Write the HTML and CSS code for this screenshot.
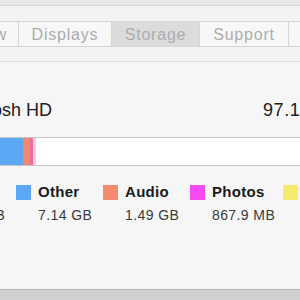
FILE: index.html
```html
<!DOCTYPE html>
<html lang="en">
<head>
    <meta charset="utf-8">
    <title>About This Mac - Storage</title>
    <link rel="stylesheet" href="styles.css">
</head>
<body>
<div class="window">
    <div class="topbar"></div>
    <div class="tabs">
        <div class="tab tab-overview">Overview</div>
        <div class="tab tab-displays">Displays</div>
        <div class="tab tab-storage selected">Storage</div>
        <div class="tab tab-support">Support</div>
        <div class="tab tab-service">Service</div>
    </div>
    <div class="pane">
        <div class="disk">
            <div class="disk-name">Macintosh HD</div>
            <div class="disk-free">97.13 GB available of 120.47 GB</div>
        </div>
        <div class="bar">
            <div class="seg seg-other"></div>
            <div class="seg seg-audio"></div>
            <div class="seg seg-photos"></div>
            <div class="seg seg-movies"></div>
        </div>
        <div class="legend">
            <div class="item item-apps">
                <span class="swatch sw-apps"></span>
                <div class="item-text">
                    <div class="label">Apps</div>
                    <div class="value">3.26 GB</div>
                </div>
            </div>
            <div class="item item-other">
                <span class="swatch sw-other"></span>
                <div class="item-text">
                    <div class="label">Other</div>
                    <div class="value">7.14 GB</div>
                </div>
            </div>
            <div class="item item-audio">
                <span class="swatch sw-audio"></span>
                <div class="item-text">
                    <div class="label">Audio</div>
                    <div class="value">1.49 GB</div>
                </div>
            </div>
            <div class="item item-photos">
                <span class="swatch sw-photos"></span>
                <div class="item-text">
                    <div class="label">Photos</div>
                    <div class="value">867.9 MB</div>
                </div>
            </div>
            <div class="item item-movies">
                <span class="swatch sw-movies"></span>
                <div class="item-text">
                    <div class="label">Movies</div>
                    <div class="value">9.76 GB</div>
                </div>
            </div>
        </div>
    </div>
    <div class="footer"></div>
</div>
</body>
</html>
```
FILE: styles.css
```css
html, body {
    margin:0;
    padding:0;
    width:300px;
    height:300px;
    overflow:hidden;
    background-color:#f3f3f3;
}
.window {
    display:flex;
    flex-direction:column;
    width:520px;
    height:300px;
    margin-left:-100px;
    font-family:"Liberation Sans", Arial, sans-serif;
}
.topbar {
    height:5px;
    background-color:#e7e7e7;
    border-bottom:1px solid #d4d4d4;
}
.tabs {
    display:flex;
    margin-top:15px;
    margin-left:22px;
    border-top:1px solid #d6d6d6;
    border-bottom:1px solid #d6d6d6;
    border-left:1px solid #d6d6d6;
}
.tab {
    box-sizing:border-box;
    flex-shrink:0;
    height:24px;
    line-height:26px;
    text-align:center;
    font-size:16px;
    letter-spacing:0.8px;
    color:#acacac;
    background-color:#f7f7f7;
    border-right:1px solid #d6d6d6;
}
.tab-overview { width:96px; }
.tab-displays { width:93px; }
.tab-storage { width:88px; }
.tab-support { width:89px; }
.tab-service { width:90px; }
.tab.selected {
    background-color:#dcdcdc;
}
.pane {
    flex:1;
    margin-top:14px;
    padding-left:29px;
    padding-top:38px;
    background-color:#f6f6f6;
    border-top:1px solid #dadada;
}
.disk {
    display:flex;
    margin-left:10px;
    font-size:18px;
    line-height:21px;
    color:#202020;
}
.disk-name {
    flex-shrink:0;
    width:324px;
    white-space:nowrap;
}
.disk-free {
    flex-shrink:0;
    letter-spacing:0.6px;
    white-space:nowrap;
}
.bar {
    display:flex;
    box-sizing:border-box;
    width:450px;
    height:29px;
    margin-top:16px;
    margin-left:10px;
    background-color:#ffffff;
    border:1px solid #c6c6c6;
}
.seg { height:100%; }
.seg-other { width:83px; background-color:#5ca8f6; }
.seg-audio { width:7px; background-color:#f3896c; }
.seg-photos { width:3px; background-color:#f06aa8; }
.seg-movies { width:3px; background-color:#f8cfcf; }
.legend {
    display:flex;
    margin-top:17px;
}
.item {
    display:flex;
    flex-shrink:0;
}
.item-apps, .item-other, .item-audio { width:87px; }
.item-photos { width:93px; }
.swatch {
    width:15px;
    height:15px;
    margin-top:2px;
    margin-right:7px;
    flex-shrink:0;
}
.sw-apps { background-color:#5fd0f5; }
.sw-other { background-color:#5ca8f6; }
.sw-audio { background-color:#f58b6e; }
.sw-photos { background-color:#f44cf2; }
.sw-movies { background-color:#f6ea6c; }
.label {
    font-size:15px;
    line-height:17px;
    font-weight:bold;
    letter-spacing:0.3px;
    color:#1a1a1a;
    white-space:nowrap;
}
.value {
    margin-top:7px;
    font-size:14px;
    line-height:17px;
    letter-spacing:0.4px;
    color:#3a3a3a;
    white-space:nowrap;
}
.footer {
    height:10px;
    background-color:#d0d0d0;
    border-top:1px solid #b8b8b8;
}
```
